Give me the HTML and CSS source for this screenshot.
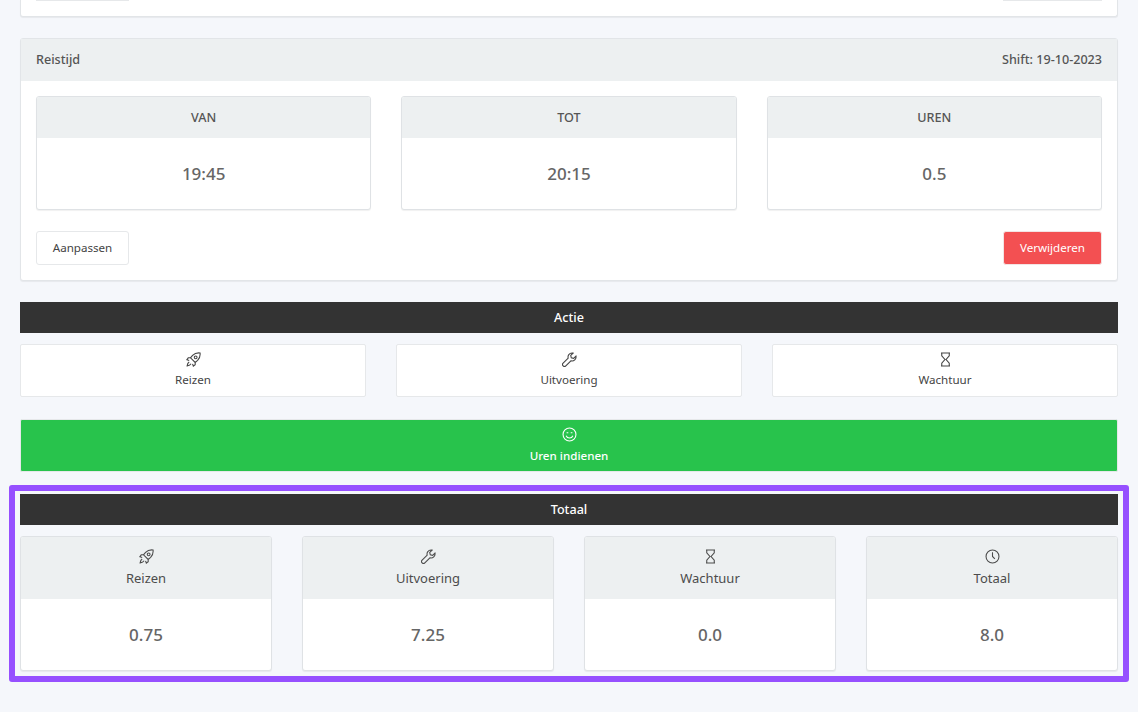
FILE: index.html
```html
<!DOCTYPE html>
<html lang="en">
<head>
    <meta charset="UTF-8">
    <title>Uren</title>
    <link rel="stylesheet" href="styles.css">
</head>
<body>
    <svg class="sprites" width="0" height="0">
        <symbol id="i-rocket" viewBox="0 0 16 16">
            <path d="M15 1c-3.300-.4-6 .6-8 2.600L4.800 6.200l5 5 2.600-2.200c2-2 3-4.700 2.600-8z"/>
            <circle cx="10.300" cy="5.700" r="1.500"/>
            <path d="M4.800 6.200H2.400L.9 8.200l2.500.8M9.800 11.200v2.400l-2 1.500-.8-2.500M3.400 10.600c-1.100.6-1.900 2-2.200 4.200 2.200-.3 3.600-1.100 4.200-2.200"/>
        </symbol>
        <symbol id="i-wrench" viewBox="0 0 16 16">
            <path d="M10.700 1a4.300 4.300 0 0 0-4.100 5.500L1.200 11.900a2 2 0 0 0 2.900 2.900l5.400-5.400a4.300 4.300 0 0 0 5.400-5l-2.500 2.400-2.500-.6-.6-2.500L11.800 1.200a4.300 4.300 0 0 0-1.100-.2z"/>
        </symbol>
        <symbol id="i-hourglass" viewBox="0 0 16 16">
            <path d="M3.200 1.100h9.600M3.200 14.900h9.600M4 1.100V4l3.400 4L4 12v2.900M12 1.100V4L8.600 8l3.400 4v2.900"/>
        </symbol>
        <symbol id="i-smile" viewBox="0 0 16 16">
            <circle cx="8" cy="8" r="6.900"/>
            <path d="M4.400 9.300c.7 1.700 2 2.500 3.600 2.500s2.900-.8 3.600-2.500M4.900 6.200h1.800M9.300 6.200h1.800"/>
        </symbol>
        <symbol id="i-clock" viewBox="0 0 16 16">
            <circle cx="8" cy="8" r="6.900"/>
            <path d="M8 3.500V8l2.500 2.500"/>
        </symbol>
    </svg>

    <div class="page">
        <!-- Card above, scrolled mostly out of view -->
        <div class="card card-cut">
            <div class="cut-row">
                <span class="cut-btn cut-left"></span>
                <span class="cut-btn cut-right"></span>
            </div>
        </div>

        <div class="card travel">
            <div class="card-header">
                <span>Reistijd</span>
                <span>Shift: 19-10-2023</span>
            </div>
            <div class="card-body">
                <div class="time-row">
                    <div class="stat">
                        <div class="stat-head">VAN</div>
                        <div class="stat-value">19:45</div>
                    </div>
                    <div class="stat">
                        <div class="stat-head">TOT</div>
                        <div class="stat-value">20:15</div>
                    </div>
                    <div class="stat">
                        <div class="stat-head">UREN</div>
                        <div class="stat-value">0.5</div>
                    </div>
                </div>
                <div class="button-row">
                    <button class="btn btn-light">Aanpassen</button>
                    <button class="btn btn-danger">Verwijderen</button>
                </div>
            </div>
        </div>

        <div class="bar">Actie</div>
        <div class="action-row">
            <a class="action">
                <svg class="icon"><use href="#i-rocket"/></svg>
                <span>Reizen</span>
            </a>
            <a class="action">
                <svg class="icon"><use href="#i-wrench"/></svg>
                <span>Uitvoering</span>
            </a>
            <a class="action">
                <svg class="icon"><use href="#i-hourglass"/></svg>
                <span>Wachtuur</span>
            </a>
        </div>

        <a class="action action-submit">
            <svg class="icon"><use href="#i-smile"/></svg>
            <span>Uren indienen</span>
        </a>

        <div class="highlight">
            <div class="bar bar-total">Totaal</div>
            <div class="total-row">
                <div class="stat">
                    <div class="stat-head stat-head-icon">
                        <svg class="icon"><use href="#i-rocket"/></svg>
                        <span>Reizen</span>
                    </div>
                    <div class="stat-value">0.75</div>
                </div>
                <div class="stat">
                    <div class="stat-head stat-head-icon">
                        <svg class="icon"><use href="#i-wrench"/></svg>
                        <span>Uitvoering</span>
                    </div>
                    <div class="stat-value">7.25</div>
                </div>
                <div class="stat">
                    <div class="stat-head stat-head-icon">
                        <svg class="icon"><use href="#i-hourglass"/></svg>
                        <span>Wachtuur</span>
                    </div>
                    <div class="stat-value">0.0</div>
                </div>
                <div class="stat">
                    <div class="stat-head stat-head-icon">
                        <svg class="icon"><use href="#i-clock"/></svg>
                        <span>Totaal</span>
                    </div>
                    <div class="stat-value">8.0</div>
                </div>
            </div>
        </div>
    </div>
</body>
</html>
```

FILE: styles.css
```css
* {
    margin: 0;
    padding: 0;
    box-sizing: border-box;
}

html, body {
    height: 712px;
    overflow: hidden;
}

body {
    font-family: "Noto Sans", "Open Sans", sans-serif;
    font-size: 11.6px;
    color: #555;
    background: #f5f7fb;
}

.sprites {
    position: absolute;
}

.page {
    padding: 0 20px;
}

.icon {
    display: block;
    width: 15px;
    height: 15px;
    fill: none;
    stroke: currentColor;
    stroke-width: 1.15;
}

.card {
    background: #fff;
    border: 1px solid #e2e5e8;
    border-radius: 3px;
    box-shadow: 0 1px 1px rgba(0, 0, 0, 0.06);
}

.card-cut {
    height: 17px;
    border-top: none;
    border-radius: 0 0 3px 3px;
}

.cut-row {
    display: flex;
    justify-content: space-between;
    padding: 0 15px;
}

.cut-btn {
    height: 1px;
    background: #e6e8ea;
}

.cut-left {
    width: 93px;
}

.cut-right {
    width: 99px;
}

.travel {
    margin-top: 21px;
}

.card-header {
    display: flex;
    justify-content: space-between;
    align-items: center;
    height: 42px;
    padding: 0 15px 2px;
    background: #edf0f1;
    font-size: 12.6px;
    font-weight: 500;
}

.card-body {
    padding: 15px;
}

.time-row {
    display: flex;
    gap: 30px;
}

.stat {
    flex: 1;
    background: #fff;
    border: 1px solid #dfe2e5;
    border-radius: 3px;
    box-shadow: 0 1px 1px rgba(0, 0, 0, 0.06);
    overflow: hidden;
}

.stat-head {
    display: flex;
    flex-direction: column;
    align-items: center;
    justify-content: center;
    height: 41px;
    padding-bottom: 1px;
    background: #edf0f1;
    font-size: 12.6px;
    font-weight: 500;
}

.stat-head-icon {
    height: 62px;
    padding-bottom: 0;
    gap: 5px;
    font-size: 13px;
    font-weight: 400;
    color: #4c4c4c;
}

.stat-head-icon .icon {
    margin-top: -1px;
}

.stat-value {
    display: flex;
    align-items: center;
    justify-content: center;
    height: 71px;
    font-size: 17px;
    font-weight: 550;
    color: #666;
}

.button-row {
    display: flex;
    justify-content: space-between;
    align-items: center;
    margin-top: 21px;
}

.btn {
    font-family: inherit;
    font-size: 11.6px;
    border-radius: 3px;
}

.btn-light {
    width: 93px;
    height: 34px;
    padding-bottom: 1px;
    background: #fff;
    border: 1px solid #e6e8ea;
    color: #444;
}

.btn-danger {
    width: 99px;
    height: 34px;
    padding-bottom: 1px;
    background: #f35052;
    border: 1px solid #f3e4e4;
    color: #fff;
}

.bar {
    margin-top: 21px;
    height: 31px;
    line-height: 31px;
    background: #333;
    color: #fff;
    text-align: center;
    font-size: 12.6px;
    font-weight: 500;
}

.action-row {
    display: flex;
    gap: 30px;
    margin-top: 11px;
}

.action {
    flex: 1;
    display: flex;
    flex-direction: column;
    align-items: center;
    justify-content: center;
    gap: 5px;
    height: 53px;
    padding-bottom: 3px;
    background: #fff;
    border: 1px solid #e6e8ea;
    border-radius: 2px;
    color: #444;
}

.action-submit {
    margin-top: 22px;
    gap: 6px;
    padding-bottom: 2px;
    background: #28c34c;
    border-color: #e6e8ea;
    color: #fff;
    font-weight: 500;
}

.highlight {
    margin: 13px -11px 0;
    padding: 3px 5px 5px;
    border: 6px solid #9650ff;
    border-radius: 3px;
}

.bar-total {
    margin-top: 0;
}

.total-row {
    display: flex;
    gap: 30px;
    margin-top: 11px;
}
```
